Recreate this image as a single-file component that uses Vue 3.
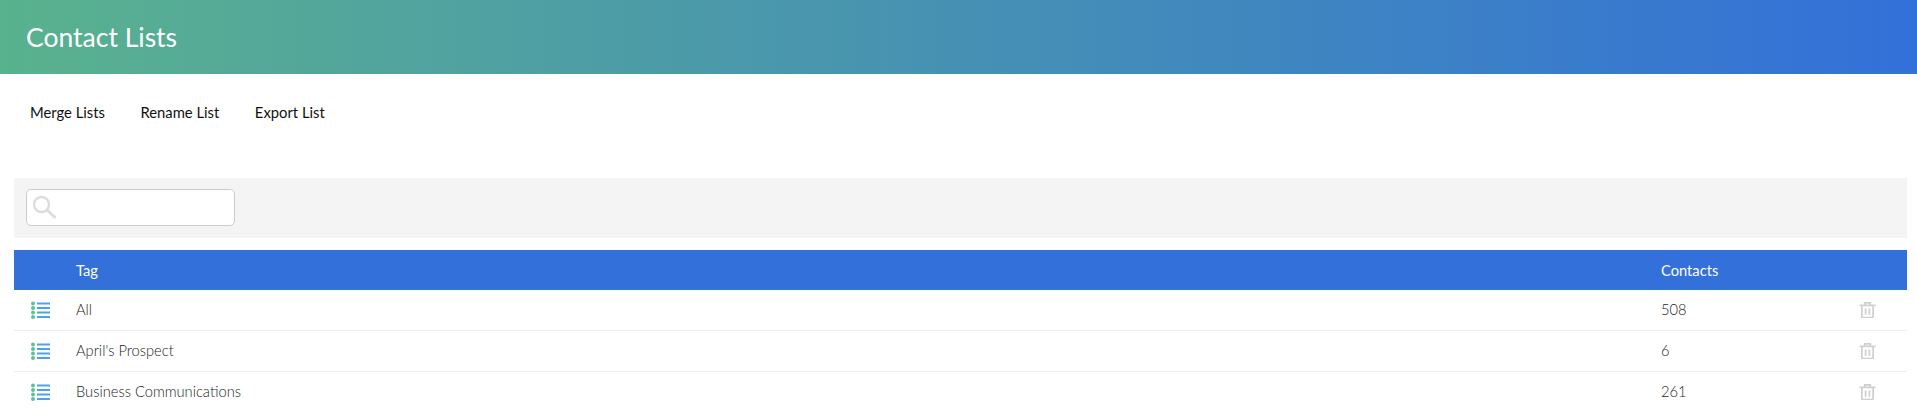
<template>
  <div class="page">
    <header class="banner">
      <h1>Contact Lists</h1>
    </header>

    <nav class="actions">
      <a v-for="action in actions" :key="action">{{ action }}</a>
    </nav>

    <div class="content">
      <div class="toolbar">
        <div class="search">
          <svg class="search-icon" viewBox="0 0 24 24" width="24" height="24" fill="none" stroke="#dcdcdc">
            <circle cx="9.5" cy="9.5" r="7.5" stroke-width="2.4" />
            <path d="M15 15l7.5 7" stroke-width="3" stroke-linecap="round" />
          </svg>
        </div>
      </div>

      <div class="row head">
        <span></span>
        <span>Tag</span>
        <span>Contacts</span>
        <span></span>
      </div>

      <div v-for="item in lists" :key="item.name" class="row">
        <svg viewBox="0 0 19 18" width="19" height="18">
          <g fill="#5cc09c">
            <circle cx="2" cy="2.5" r="2" />
            <circle cx="2" cy="7" r="2" />
            <circle cx="2" cy="11.5" r="2" />
            <circle cx="2" cy="16" r="2" />
          </g>
          <g fill="#4da3ea">
            <rect x="6" y="1.5" width="13" height="2" />
            <rect x="6" y="6" width="13" height="2" />
            <rect x="6" y="10.5" width="13" height="2" />
            <rect x="6" y="15" width="13" height="2" />
          </g>
        </svg>
        <span class="cell">{{ item.name }}</span>
        <span class="cell">{{ item.count }}</span>
        <svg class="trash" viewBox="0 0 18 17" width="17" height="16" fill="none" stroke="#cfcfcf" stroke-width="1.8">
          <path d="M0.5 3.6h17" />
          <path d="M6 3.5V1h6v2.5" />
          <path d="M3 4v11.5a1 1 0 0 0 1 1h10a1 1 0 0 0 1-1V4" />
          <path d="M7 7v6.5M11 7v6.5" />
        </svg>
      </div>
    </div>
  </div>
</template>

<script setup>
const actions = ['Merge Lists', 'Rename List', 'Export List']

const lists = [
  { name: 'All', count: 508 },
  { name: "April's Prospect", count: 6 },
  { name: 'Business Communications', count: 261 }
]
</script>

<style>
body {
  overflow: hidden;
}
</style>

<style scoped>
.page {
  height: 410px;
  overflow: hidden;
  background: #fff;
  font-family: Lato, sans-serif;
}

.banner {
  height: 74px;
  display: flex;
  align-items: center;
  padding-left: 26px;
  box-sizing: border-box;
  background: linear-gradient(90deg, #59b28e, #3370d9);
}

.banner h1 {
  margin: 0;
  color: #fff;
  font-size: 26.5px;
  font-weight: 400;
}

.actions {
  height: 104px;
  padding: 28px 0 0 30px;
  box-sizing: border-box;
  display: flex;
  gap: 35.5px;
}

.actions a {
  height: 20px;
  line-height: 20px;
  color: #111;
  font-size: 14.8px;
}

.content {
  margin: 0 10px 0 14px;
}

.toolbar {
  height: 60px;
  margin-bottom: 12px;
  padding: 11px 12px;
  box-sizing: border-box;
  background: #f4f4f4;
}

.search {
  width: 209px;
  height: 37px;
  padding: 5px 0 0 5px;
  box-sizing: border-box;
  display: flex;
  align-items: flex-start;
  background: #fff;
  border: 1px solid #ccc;
  border-radius: 5px;
}

.row {
  height: 41px;
  display: grid;
  grid-template-columns: 45px 1585px 198px 18px;
  padding-left: 17px;
  align-items: center;
  box-sizing: border-box;
  border-bottom: 1px solid #eee;
  color: #1c1c1c;
  font-size: 14.7px;
  font-weight: 300;
}

.row .cell {
  margin-top: -2px;
}

.row.head {
  height: 40px;
  border-bottom: 0;
  background: #3370d9;
  color: #fff;
  font-weight: 400;
}
</style>
